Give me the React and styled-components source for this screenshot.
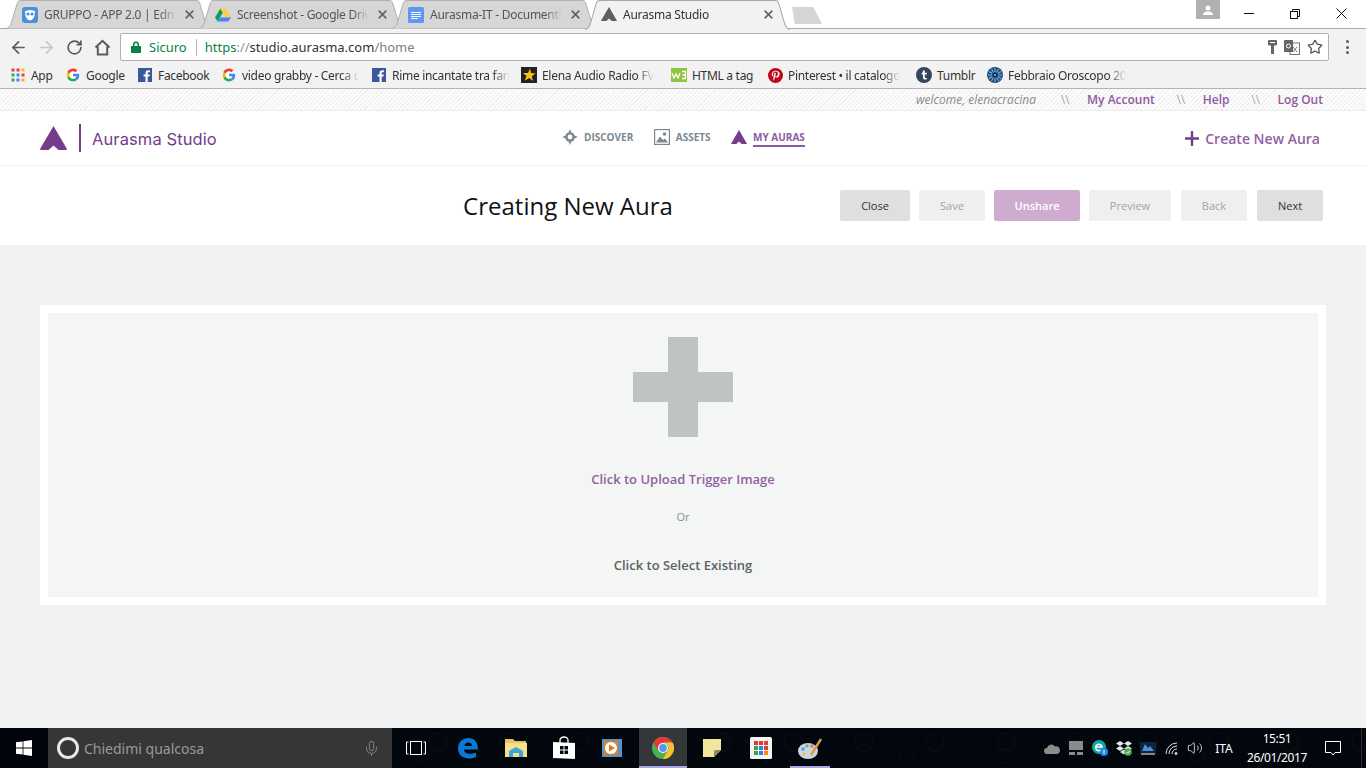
import { ArrowLeft, ArrowRight, RotateCw, Star, Mic, Volume2 } from "lucide-react";
import styled, { createGlobalStyle } from "styled-components";

const GlobalStyle = createGlobalStyle`
  html, body { margin: 0; padding: 0; height: 100%; overflow: hidden; }
  body { font-family: "Open Sans", "Liberation Sans", sans-serif; }
  * { box-sizing: border-box; }
`;

const Page = styled.div`
  width: 1366px;
  height: 768px;
  display: flex;
  flex-direction: column;
  overflow: hidden;
  background: #f1f2f4;
`;

/* browser chrome */
const TabStrip = styled.div`
  height: 29px;
  flex: none;
  display: flex;
  background: #fff;
  border-bottom: 1px solid #aaa;
  padding-left: 6px;
`;

const TabBox = styled.div`
  position: relative;
  width: 205px;
  height: ${(p) => (p.$active ? "30px" : "29px")};
  margin-right: -12px;
  padding: 0 16px;
  display: flex;
  align-items: center;
  z-index: ${(p) => (p.$active ? 2 : 1)};
  flex: none;
  & > svg.shape {
    position: absolute;
    left: 0;
    top: 0;
    width: 100%;
    height: 100%;
    z-index: -1;
  }
`;

const TabIcon = styled.span`
  width: 16px;
  height: 16px;
  display: flex;
  margin-right: 6px;
  flex: none;
  margin-bottom: ${(p) => (p.$active ? "1px" : "0")};
`;

const TabTitle = styled.span`
  font: 12px "Noto Sans", sans-serif;
  letter-spacing: -0.25px;
  color: ${(p) => (p.$active ? "#333" : "#555")};
  width: 136px;
  white-space: nowrap;
  overflow: hidden;
  flex: none;
  margin-bottom: ${(p) => (p.$active ? "1px" : "0")};
  mask-image: linear-gradient(to right, #000 85%, transparent 97%);
`;

const TabClose = styled.svg`
  width: 9px;
  height: 9px;
  margin-left: 5px;
  flex: none;
  margin-bottom: ${(p) => (p.$active ? "1px" : "0")};
`;

const NewTab = styled.div`
  width: 34px;
  height: 17px;
  margin: 7px 0 0 10px;
  flex: none;
  background: #d5d5d5;
  clip-path: polygon(12% 0, 74% 0, 100% 100%, 20% 100%);
`;

const WindowControls = styled.div`
  margin-left: auto;
  display: flex;
  height: 28px;
  padding-right: 2px;
  align-items: flex-start;
`;

const ProfileBadge = styled.div`
  width: 24px;
  height: 19px;
  background: #b0b0b0;
  display: flex;
  align-items: center;
  justify-content: center;
  margin-right: 6px;
`;

const WinButton = styled.div`
  width: 46px;
  height: 27px;
  display: flex;
  align-items: center;
  justify-content: center;
`;

const Toolbar = styled.div`
  height: 33px;
  flex: none;
  display: flex;
  align-items: center;
  background: #f2f2f2;
  padding: 3px 0 0 4px;
`;

const NavButton = styled.div`
  width: 28px;
  height: 24px;
  display: flex;
  align-items: center;
  justify-content: center;
  flex: none;
`;

const Omnibox = styled.div`
  width: 1209px;
  height: 28px;
  margin-left: 4px;
  background: #fff;
  border: 1px solid #b0b0b0;
  border-radius: 2px;
  display: flex;
  align-items: center;
  padding: 0 5px 0 10px;
  font: 13px "Noto Sans", sans-serif;
`;

const Secure = styled.span`
  color: #0b8043;
  margin-left: 8px;
  padding-right: 9px;
  border-right: 1px solid #b8b8b8;
  line-height: 17px;
`;

const Url = styled.span`
  margin-left: 8px;
  color: #0b8043;
  u { text-decoration: none; color: #8a9a92; }
  b { font-weight: 400; color: #333; }
  i { font-style: normal; color: #808080; }
`;

const OmniIcons = styled.div`
  margin-left: auto;
  display: flex;
  align-items: center;
  gap: 7px;
`;

const MenuDots = styled.div`
  margin-left: 17px;
  display: flex;
  flex-direction: column;
  gap: 2.5px;
  span {
    width: 3px;
    height: 3px;
    border-radius: 50%;
    background: #5f5f5f;
  }
`;

const BookmarkBar = styled.div`
  height: 27px;
  flex: none;
  display: flex;
  align-items: center;
  background: #f2f2f2;
  border-bottom: 1px solid #b4b4b4;
  padding-left: 10px;
`;

const Bookmark = styled.div`
  width: ${(p) => p.$w}px;
  flex: none;
  display: flex;
  align-items: center;
  gap: 5px;
  font: 12px "Noto Sans", sans-serif;
  letter-spacing: -0.3px;
  color: #333;
  white-space: nowrap;
`;

const BookmarkIcon = styled.span`
  width: 16px;
  height: 16px;
  flex: none;
  display: flex;
  align-items: center;
  justify-content: center;
`;

const BookmarkLabel = styled.span`
  ${(p) =>
    p.$fade
      ? `mask-image: linear-gradient(to right, #000 85%, transparent 100%);`
      : ""}
`;

/* site header */
const UserBar = styled.div`
  height: 22px;
  flex: none;
  display: flex;
  align-items: center;
  justify-content: flex-end;
  padding: 0 43px 1px 0;
  font-size: 12px;
  color: #8b8b8b;
  border-bottom: 1px solid #ececec;
  background: repeating-linear-gradient(135deg, #fff 0 1.5px, #f1f1f1 1.5px 3px);
`;

const Welcome = styled.i`
  margin-right: 3px;
`;

const UserLink = styled.span`
  color: #8f5a9f;
  font-weight: 600;
`;

const Slashes = styled.span`
  margin: 0 17px 0 22px;
  color: #777;
  width: 9px;
  font-weight: 300;
`;

const Header = styled.header`
  height: 55px;
  flex: none;
  background: #fff;
  border-bottom: 1px solid #f0f0f0;
  display: flex;
  align-items: center;
  padding: 0 46px 0 40px;
`;

const Brand = styled.div`
  display: flex;
  align-items: center;
  width: 522px;
  flex: none;
`;

const BrandName = styled.span`
  margin-left: 11px;
  padding-top: 2px;
  font: 400 16.5px Inter, sans-serif;
  letter-spacing: 0.1px;
  color: #753c8b;
`;

const BrandRule = styled.span`
  width: 2px;
  height: 28px;
  margin-left: 12px;
  background: #753c8b;
`;

const Nav = styled.nav`
  display: flex;
  align-items: center;
  gap: 20.5px;
  margin-bottom: 2px;
`;

const NavItem = styled.div`
  display: flex;
  align-items: center;
  gap: 6px;
  font-size: 10px;
  font-weight: 700;
  color: ${(p) => (p.$active ? "#8f5a9f" : "#7c8791")};
  span {
    padding: 2px 0 1px;
    border-bottom: 2px solid ${(p) => (p.$active ? "#8f5a9f" : "transparent")};
  }
`;

const CreateLink = styled.div`
  margin-left: auto;
  display: flex;
  align-items: center;
  gap: 6px;
  font-size: 14px;
  font-weight: 600;
  color: #935fa3;
`;

const TitleRow = styled.div`
  height: 79px;
  flex: none;
  background: #fff;
  display: flex;
  align-items: center;
  padding: 0 43px 0 296px;
`;

const Title = styled.h1`
  flex: 1;
  margin: 0;
  text-align: center;
  font-size: 24px;
  font-weight: 400;
  color: #111;
`;

const Buttons = styled.div`
  display: flex;
  gap: 9px;
`;

const ActionButton = styled.button`
  width: ${(p) => p.$w}px;
  height: 31px;
  margin-left: ${(p) => p.$ml || 0}px;
  padding: 0;
  border: 0;
  border-radius: 2px;
  font-family: inherit;
  font-size: 11px;
  font-weight: ${(p) => (p.$kind === "accent" ? 600 : 400)};
  background: ${(p) =>
    p.$kind === "accent" ? "#cfabcf" : p.$kind === "off" ? "#efefef" : "#dfdfdf"};
  color: ${(p) =>
    p.$kind === "accent" ? "#fff" : p.$kind === "off" ? "#a4a4a4" : "#333"};
`;

/* main */
const Main = styled.main`
  flex: 1;
  min-height: 0;
  padding: 60px 40px 0;
`;

const Card = styled.section`
  height: 300px;
  padding: 8px;
  background: #fff;
`;

const DropZone = styled.div`
  height: 100%;
  padding-top: 24px;
  background: #f4f6f6;
  display: flex;
  flex-direction: column;
  align-items: center;
`;

const BigPlus = styled.div`
  width: 100px;
  height: 100px;
  flex: none;
  background:
    linear-gradient(#bfc3c4, #bfc3c4) center / 30px 100px no-repeat,
    linear-gradient(#bfc3c4, #bfc3c4) center / 100px 30px no-repeat;
`;

const UploadText = styled.div`
  margin-top: 33px;
  line-height: 18px;
  font-size: 13px;
  font-weight: 600;
  color: #935fa3;
`;

const OrText = styled.div`
  margin-top: 21px;
  line-height: 16px;
  font-size: 11px;
  color: #8b9296;
`;

const SelectText = styled.div`
  margin-top: 31px;
  line-height: 18px;
  font-size: 13px;
  font-weight: 600;
  color: #5d6161;
`;

/* windows taskbar */
const Taskbar = styled.footer`
  height: 40px;
  flex: none;
  display: flex;
  align-items: stretch;
  color: #fff;
  background:
    radial-gradient(circle at 12px 14px, transparent 8px, #0a0e15 9px, transparent 10px) 0 0 / 71px 40px,
    radial-gradient(circle at 34px 28px, transparent 6px, #090d14 7px, transparent 8px) 0 0 / 97px 40px,
    #02060d;
`;

const StartButton = styled.div`
  width: 48px;
  flex: none;
  display: flex;
  align-items: center;
  justify-content: center;
  background: #01040a;
`;

const SearchBox = styled.div`
  width: 344px;
  flex: none;
  display: flex;
  align-items: center;
  background: #363636;
  padding: 0 12px 0 9px;
  font: 14px "Noto Sans", sans-serif;
  color: #9a9a9a;
  svg { margin-left: auto; }
`;

const CortanaRing = styled.span`
  width: 22px;
  height: 22px;
  margin-right: 5px;
  border: 3px solid #e8e8e8;
  border-radius: 50%;
  flex: none;
`;

const TaskView = styled.div`
  width: 52px;
  flex: none;
  display: flex;
  align-items: center;
  justify-content: center;
  padding-right: 4px;
`;

const TaskSlot = styled.div`
  position: relative;
  width: 48px;
  flex: none;
  margin-left: ${(p) => p.$ml || 0}px;
  display: flex;
  align-items: center;
  justify-content: center;
  background: ${(p) => (p.$active ? "#34373a" : "transparent")};
  ${(p) =>
    p.$open
      ? `&::after {
          content: "";
          position: absolute;
          bottom: 0;
          left: ${p.$active ? 0 : 4}px;
          right: ${p.$active ? 0 : 4}px;
          height: 2px;
          background: #a8a4e6;
        }`
      : ""}
`;

const Tray = styled.div`
  margin-left: auto;
  display: flex;
  align-items: center;
`;

const TrayIcon = styled.div`
  width: ${(p) => p.$w || 24}px;
  display: flex;
  justify-content: center;
`;

const Lang = styled.div`
  width: 36px;
  text-align: center;
  font: 12px "Noto Sans", sans-serif;
`;

const Clock = styled.div`
  width: 64px;
  margin-left: 3px;
  text-align: center;
  font: 12px/19px "Noto Sans", sans-serif;
  letter-spacing: -0.4px;
  white-space: nowrap;
`;

const Notify = styled.div`
  width: 48px;
  display: flex;
  justify-content: center;
  align-items: center;
`;

const ShowDesktop = styled.div`
  width: 5px;
  height: 40px;
  margin-left: 4px;
  border-left: 1px solid #2a2a2a;
`;

/* drawings */
function AuraMark({ size = 16, color = "#5f5f5f" }) {
  return (
    <svg width={size} height={size * 0.89} viewBox="0 0 27 24">
      <path
        fill={color}
        d="M13.5 0 L26.7 22.6 Q27.2 24 26 24 H18.5 L13.5 19.5 L8.5 24 H1 Q-.2 24 .3 22.6 Z"
      />
    </svg>
  );
}

function EdmodoIcon() {
  return (
    <svg width="16" height="16" viewBox="0 0 16 16">
      <rect width="16" height="16" rx="3" fill="#4a90d9" />
      <path fill="#fff" d="M3 4 L8 3 L13 4 L12.5 9 Q11 13 8 13.5 Q5 13 3.5 9 Z" />
      <circle cx="6" cy="7" r="1.6" fill="#4a90d9" />
      <circle cx="10" cy="7" r="1.6" fill="#4a90d9" />
    </svg>
  );
}

function DriveIcon() {
  return (
    <svg width="16" height="16" viewBox="0 0 16 16">
      <path fill="#0f9d58" d="M5.3 1.5 L0 10.5 L2.7 14.5 L8 5.5 Z" />
      <path fill="#ffcd40" d="M5.3 1.5 H10.7 L16 10.5 H10.7 Z" />
      <path fill="#4687f4" d="M2.7 14.5 L5.3 10.5 H16 L13.3 14.5 Z" />
    </svg>
  );
}

function DocsIcon() {
  return (
    <svg width="16" height="16" viewBox="0 0 16 16">
      <rect width="16" height="16" rx="1.5" fill="#5e97f6" />
      <path stroke="#fff" strokeWidth="1" d="M3 5.5 H13 M3 7.5 H13 M3 9.5 H13 M3 11.5 H10" />
    </svg>
  );
}

function GoogleIcon() {
  return (
    <svg width="14" height="14" viewBox="0 0 48 48">
      <circle cx="24" cy="24" r="24" fill="#fff" />
      <path fill="#ea4335" d="M24 11c3.4 0 6.4 1.2 8.8 3.4l6.5-6.5C35.3 4.2 30.100 2 24 2 15.400 2 8 6.900 4.400 14.100l7.600 5.900C13.800 14.700 18.500 11 24 11z" />
      <path fill="#4285f4" d="M45.500 24.500c0-1.600-.1-3.100-.4-4.500H24v8.500h12.100c-.5 2.800-2.100 5.100-4.500 6.700l7.300 5.700c4.300-4 6.600-9.800 6.600-16.400z" />
      <path fill="#fbbc05" d="M12 28c-.5-1.300-.7-2.600-.7-4s.3-2.700.7-4l-7.600-5.900C2.900 17.100 2 20.400 2 24s.9 6.900 2.400 9.900L12 28z" />
      <path fill="#34a853" d="M24 46c6 0 11-2 14.800-5.400l-7.300-5.700c-2 1.400-4.600 2.200-7.500 2.200-5.500 0-10.200-3.700-12-8.900l-7.600 5.900C8 41.100 15.400 46 24 46z" />
    </svg>
  );
}

function FacebookIcon() {
  return (
    <svg width="14" height="14" viewBox="0 0 14 14">
      <rect width="14" height="14" fill="#3b5998" />
      <path fill="#fff" d="M9.700 14 V8.600 H11.500 L11.800 6.500 H9.700 V5.200 C9.700 4.600 9.900 4.200 10.700 4.200 H11.900 V2.300 C11.600 2.300 11 2.200 10.200 2.200 C8.600 2.200 7.500 3.200 7.500 5 V6.500 H5.600 V8.600 H7.500 V14 Z" />
    </svg>
  );
}

function AppsIcon() {
  const colors = ["#ea4335", "#ea4335", "#fbbc05", "#34a853", "#4285f4", "#ea4335", "#34a853", "#4285f4", "#fbbc05"];
  return (
    <svg width="14" height="14" viewBox="0 0 14 14">
      {colors.map((c, i) => (
        <rect key={i} x={(i % 3) * 5 + 0.5} y={Math.floor(i / 3) * 5 + 0.5} width="3" height="3" fill={c} />
      ))}
    </svg>
  );
}

function StarBadge() {
  return (
    <svg width="16" height="16" viewBox="0 0 16 16">
      <rect width="16" height="16" fill="#222" />
      <path fill="#f7c413" d="M9 1.500 L10 6 L14.500 6.500 L10.800 9.300 L12 14 L8.300 11 L3.800 13.500 L5.500 9 L2 6 L7 6 Z" />
    </svg>
  );
}

function W3Icon() {
  return (
    <svg width="16" height="16" viewBox="0 0 16 16">
      <rect y="1" width="16" height="14" fill="#8cc63f" />
      <path fill="none" stroke="#fff" strokeWidth="1.300" d="M1 6 L3 11 L5 7 L7 11 L9 6 M11 4.500 H14.500 V11.500 H11 M11.500 8 H14.500" />
    </svg>
  );
}

function PinterestIcon() {
  return (
    <svg width="15" height="15" viewBox="0 0 16 16">
      <circle cx="8" cy="8" r="8" fill="#bd081c" />
      <path fill="#fff" d="M8.300 3C5.700 3 4 4.800 4 6.700c0 1.100.5 2 1.300 2.400.2.100.3 0 .4-.2l.1-.6c0-.2 0-.3-.1-.4-.3-.4-.5-.8-.5-1.400 0-1.500 1.100-2.700 2.900-2.700 1.600 0 2.400 1 2.400 2.200 0 1.700-.7 3-1.800 3-.6 0-1-.5-.9-1.100.2-.7.5-1.500.5-2 0-.5-.3-.9-.8-.9-.6 0-1.100.6-1.100 1.500 0 .5.200.9.200.9l-.8 3.200c-.2 1-.1 2.100 0 2.900.5-.6 1-1.500 1.300-2.300l.5-1.800c.2.400.9.800 1.500.8 2 0 3.300-1.800 3.300-4.200C12.400 4.600 10.700 3 8.300 3z" />
    </svg>
  );
}

function TumblrIcon() {
  return (
    <svg width="16" height="16" viewBox="0 0 16 16">
      <circle cx="8" cy="8" r="8" fill="#35465c" />
      <path fill="#fff" d="M7 3.500 H8.800 V5.800 H10.800 V7.400 H8.800 V10 C8.800 10.900 9.500 11.100 10.800 10.700 V12.200 C8.500 13 7 12.200 7 10.400 V7.400 H5.700 V6.200 C6.500 5.900 6.900 4.900 7 3.500 Z" />
    </svg>
  );
}

function ZodiacIcon() {
  const spokes = Array.from({ length: 12 }, (_, i) => i * 30);
  return (
    <svg width="16" height="16" viewBox="0 0 16 16">
      <circle cx="8" cy="8" r="8" fill="#1d4e7f" />
      {spokes.map((a) => (
        <rect key={a} x="7.500" y="1" width="1" height="4" fill="#7fb1d9" transform={`rotate(${a} 8 8)`} />
      ))}
      <circle cx="8" cy="8" r="2.500" fill="#0d2f52" />
      <circle cx="8" cy="8" r="1" fill="#9cc6e6" />
    </svg>
  );
}

function HomeIcon() {
  return (
    <svg width="17" height="17" viewBox="0 0 17 17" fill="none" stroke="#5a5a5a" strokeWidth="2">
      <path d="M1.500 8.500 L8.500 1.800 L15.500 8.500" />
      <path d="M3.800 7.500 V15.500 H13.200 V7.500" />
    </svg>
  );
}

function LockIcon() {
  return (
    <svg width="10" height="12" viewBox="0 0 10 12">
      <path fill="none" stroke="#0b8043" strokeWidth="1.500" d="M2.700 5.500 V3.500 A2.300 2.300 0 0 1 7.300 3.500 V5.500" />
      <rect y="5" width="10" height="7" rx="0.500" fill="#0b8043" />
    </svg>
  );
}

function KeyIcon() {
  return (
    <svg width="9" height="15" viewBox="0 0 9 15">
      <rect width="9" height="5.500" rx="1" fill="#666" />
      <rect x="3" y="5" width="3" height="9" fill="#666" />
      <rect x="2" y="2" width="5" height="1" fill="#fff" />
    </svg>
  );
}

function TranslateIcon() {
  return (
    <svg width="16" height="15" viewBox="0 0 16 15">
      <rect x="6" y="3" width="9.500" height="11.500" fill="#fff" stroke="#777" />
      <rect width="9" height="12" rx="0.500" fill="#666" />
      <circle cx="4.500" cy="6" r="2" fill="none" stroke="#fff" />
      <path stroke="#777" d="M9 7 L13 12 M13 7 L9 12" />
    </svg>
  );
}

function DiscoverIcon() {
  return (
    <svg width="16" height="16" viewBox="0 0 16 16">
      <path fill="#7c8791" d="M8 0 L9.300 3.200 A5 5 0 0 1 12.800 6.700 L16 8 L12.800 9.300 A5 5 0 0 1 9.300 12.800 L8 16 L6.700 12.800 A5 5 0 0 1 3.200 9.300 L0 8 L3.200 6.700 A5 5 0 0 1 6.700 3.200 Z" />
      <circle cx="8" cy="8" r="2.400" fill="#fff" />
    </svg>
  );
}

function AssetsIcon() {
  return (
    <svg width="16" height="16" viewBox="0 0 16 16">
      <rect x="0.600" y="0.600" width="14.800" height="14.800" fill="#fff" stroke="#7c8791" strokeWidth="1.200" />
      <circle cx="10.500" cy="5" r="1.800" fill="#7c8791" />
      <path fill="#7c8791" d="M2 13.500 L6 7.500 L9 11 L11 9.500 L14 13.500 Z" />
    </svg>
  );
}

function PlusMark() {
  return (
    <svg width="14" height="15" viewBox="0 0 14 15">
      <path fill="#753c8b" d="M5.800 0 H8.200 V6.300 H14 V8.700 H8.200 V15 H5.800 V8.700 H0 V6.300 H5.800 Z" />
    </svg>
  );
}

function WinLogo() {
  return (
    <svg width="16" height="16" viewBox="0 0 16 16">
      <path fill="#fff" d="M0 2.300 L6.600 1.400 V7.600 H0 Z M7.400 1.300 L16 0 V7.600 H7.400 Z M0 8.400 H6.600 V14.600 L0 13.700 Z M7.400 8.400 H16 V16 L7.400 14.700 Z" />
    </svg>
  );
}

function EdgeIcon() {
  return (
    <svg width="20" height="21" viewBox="0 0 20 21">
      <path fill="#0a78d7" d="M0 10 C.5 3.500 5 0 10.500 0 C16.500 0 20 4.500 20 11.500 H6 C6.300 15.500 11.500 17.500 18 14.500 V19 C10 22.500 0 20 0 10 Z M6.300 8 H14 C14 3.500 7.500 3.200 6.300 8 Z" />
    </svg>
  );
}

function ExplorerIcon() {
  return (
    <svg width="22" height="18" viewBox="0 0 22 18">
      <path fill="#e8c35c" d="M0 0 H8 L10 2 H21 V5 H0 Z" />
      <path fill="#f7e08c" d="M0 4 H22 V18 H0 Z" />
      <path fill="#3aa6de" d="M4 18 V12 L11 8 L18 12 V18 H14 V14 H8 V18 Z" />
    </svg>
  );
}

function StoreIcon() {
  return (
    <svg width="22" height="24" viewBox="0 0 22 24">
      <path fill="none" stroke="#fff" strokeWidth="1.300" d="M7 7 V4 A4 3 0 0 1 15 4 V7" />
      <path fill="#fff" d="M0 6 L22 7 V23 L0 22 Z" />
      <path fill="#05090f" d="M7 10 H10.500 V13.500 H7 Z M11.500 10 H15 V13.500 H11.500 Z M7 14.500 H10.500 V18 H7 Z M11.500 14.500 H15 V18 H11.500 Z" />
    </svg>
  );
}

function MediaIcon() {
  return (
    <svg width="20" height="18" viewBox="0 0 20 18">
      <rect width="20" height="18" fill="#5b92c4" />
      <rect x="2" y="2" width="14" height="14" fill="#d9812d" />
      <circle cx="9" cy="9" r="6" fill="#fff" />
      <path fill="#e8761f" d="M7 5.500 L13 9 L7 12.500 Z" />
    </svg>
  );
}

function ChromeIcon() {
  return (
    <svg width="22" height="22" viewBox="0 0 48 48">
      <circle cx="24" cy="24" r="24" fill="#4caf50" />
      <path fill="#e53935" d="M24 0 A24 24 0 0 1 44.800 12 H24 A12 12 0 0 0 13.600 18 L3.200 12 A24 24 0 0 1 24 0 Z" />
      <path fill="#e53935" d="M3.200 12 L13.600 30 L24 12 Z" />
      <path fill="#fbc02d" d="M44.800 12 A24 24 0 0 1 24 48 L34.400 30 A12 12 0 0 0 24 12 Z" />
      <circle cx="24" cy="24" r="11" fill="#fff" />
      <circle cx="24" cy="24" r="8.500" fill="#5a96ee" />
    </svg>
  );
}

function StickyIcon() {
  return (
    <svg width="18" height="18" viewBox="0 0 18 18">
      <path fill="#f1e79b" d="M0 0 H18 V11 L11 18 H0 Z" />
      <path fill="#8a8468" d="M18 11 L11 18 V13 Q11 11 13 11 Z" />
    </svg>
  );
}

function GridAppIcon() {
  const colors = ["#e53935", "#e53935", "#e53935", "#43a047", "#1e88e5", "#e53935", "#43a047", "#1e88e5", "#fb8c00"];
  return (
    <svg width="22" height="22" viewBox="0 0 22 22">
      <rect width="22" height="22" rx="1.500" fill="#f3f3f3" />
      {colors.map((c, i) => (
        <rect key={i} x={(i % 3) * 5 + 4} y={Math.floor(i / 3) * 5 + 4} width="4" height="4" fill={c} />
      ))}
    </svg>
  );
}

function PaintIcon() {
  return (
    <svg width="25" height="23" viewBox="0 0 25 23">
      <ellipse cx="10" cy="14" rx="10" ry="8" fill="#c9d6e6" />
      <circle cx="5" cy="12" r="1.800" fill="#4aa3df" />
      <circle cx="9" cy="9" r="1.800" fill="#6cbf4b" />
      <circle cx="14" cy="9" r="1.800" fill="#e57373" />
      <circle cx="6" cy="17" r="1.800" fill="#f0c04a" />
      <path stroke="#d89b4a" strokeWidth="2.500" d="M13 18 L23 2" />
    </svg>
  );
}

function CloudIcon() {
  return (
    <svg width="16" height="11" viewBox="0 0 16 11">
      <path fill="#8d8d8d" d="M3 11 A3 3 0 0 1 3 5 A4.500 4.500 0 0 1 11 3.500 A3.800 3.800 0 0 1 13 11 Z" />
    </svg>
  );
}

function NetDriveIcon() {
  return (
    <svg width="14" height="14" viewBox="0 0 14 14">
      <rect width="14" height="9" fill="#8a8a8a" />
      <rect y="11" width="6" height="3" fill="#8a8a8a" />
      <rect x="8" y="11" width="6" height="3" fill="#8a8a8a" />
    </svg>
  );
}

function EsetIcon() {
  return (
    <svg width="16" height="16" viewBox="0 0 16 16">
      <circle cx="7" cy="7" r="7" fill="#13a8a8" />
      <path fill="none" stroke="#fff" strokeWidth="1.600" d="M3.500 7 H10 A3.200 3.200 0 1 0 9 9.800" />
      <circle cx="12" cy="12" r="4" fill="#1e88e5" />
      <rect x="11.500" y="10" width="1" height="4" fill="#fff" />
    </svg>
  );
}

function DropboxIcon() {
  return (
    <svg width="16" height="15" viewBox="0 0 16 15">
      <path fill="#e8e8e8" d="M4 0 L8 2.500 L4 5 L0 2.500 Z M12 0 L16 2.500 L12 5 L8 2.500 Z M4 5 L8 7.500 L4 10 L0 7.500 Z M12 5 L16 7.500 L12 10 L8 7.500 Z M4 11 L8 8.500 L12 11 L8 13.500 Z" />
      <circle cx="12" cy="11" r="3.800" fill="#4caf50" />
      <path fill="none" stroke="#fff" d="M10.300 11 L11.600 12.300 L13.800 9.800" />
    </svg>
  );
}

function MonitorIcon() {
  return (
    <svg width="16" height="13" viewBox="0 0 16 13">
      <rect width="16" height="11" fill="#10233f" />
      <path fill="#4a90d9" d="M2 9 L5 2 L8 6 L10 4 L14 9 Z" />
      <rect x="1" y="11" width="14" height="2" fill="#888" />
    </svg>
  );
}

function WifiIcon() {
  return (
    <svg width="15" height="13" viewBox="0 0 15 13" fill="none" stroke="#ddd" strokeWidth="1">
      <path d="M1 12 A11 11 0 0 1 12 1" />
      <path d="M4 12 A8 8 0 0 1 12 4" />
      <path d="M7 12 A5 5 0 0 1 12 7" />
      <circle cx="11" cy="11.500" r="1" fill="#ddd" />
    </svg>
  );
}

function TabShape({ active }) {
  return (
    <svg className="shape" viewBox="0 0 205 29" preserveAspectRatio="none">
      <path
        d="M0 28.500 C3 28 4 26 5 24 L11.500 2.500 C12 1 13 .5 15 .5 H190 C192 .5 193 1 193.500 2.500 L200 24 C201 26 202 28 205 28.500"
        fill={active ? "#f2f2f2" : "#d6d6d6"}
        stroke={active ? "#a8a8a8" : "#b0b0b0"}
        strokeWidth="1"
      />
    </svg>
  );
}

function Tab({ icon, title, active }) {
  return (
    <TabBox $active={active}>
      <TabShape active={active} />
      <TabIcon $active={active}>{icon}</TabIcon>
      <TabTitle $active={active}>{title}</TabTitle>
      <TabClose $active={active} viewBox="0 0 9 9" stroke="#666" strokeWidth="1.700">
        <path d="M.7 .7 L8.300 8.300 M8.300 .7 L.7 8.300" />
      </TabClose>
    </TabBox>
  );
}

const bookmarks = [
  { w: 55, icon: <AppsIcon />, label: "App" },
  { w: 72, icon: <GoogleIcon />, label: "Google" },
  { w: 84, icon: <FacebookIcon />, label: "Facebook" },
  { w: 150, icon: <GoogleIcon />, label: "video grabby - Cerca c", fade: true },
  { w: 150, icon: <FacebookIcon />, label: "Rime incantate tra fan", fade: true },
  { w: 150, icon: <StarBadge />, label: "Elena Audio Radio FV", fade: true },
  { w: 96, icon: <W3Icon />, label: "HTML a tag" },
  { w: 149, icon: <PinterestIcon />, label: "Pinterest • il catalogo", fade: true },
  { w: 71, icon: <TumblrIcon />, label: "Tumblr" },
  { w: 150, icon: <ZodiacIcon />, label: "Febbraio Oroscopo 20", fade: true },
];

const actions = [
  { label: "Close", w: 70 },
  { label: "Save", w: 66, kind: "off" },
  { label: "Unshare", w: 86, kind: "accent" },
  { label: "Preview", w: 82, kind: "off" },
  { label: "Back", w: 66, kind: "off", ml: 1 },
  { label: "Next", w: 66, ml: 1 },
];

export default function App() {
  return (
    <Page>
      <GlobalStyle />
      <TabStrip>
        <Tab icon={<EdmodoIcon />} title="GRUPPO - APP 2.0 | Edm" />
        <Tab icon={<DriveIcon />} title="Screenshot - Google Driv" />
        <Tab icon={<DocsIcon />} title="Aurasma-IT - Documenti" />
        <Tab icon={<AuraMark />} title="Aurasma Studio" active />
        <NewTab />
        <WindowControls>
          <ProfileBadge>
            <svg width="12" height="10" viewBox="0 0 12 10">
              <circle cx="6" cy="3" r="2.500" fill="#fff" />
              <path fill="#fff" d="M1 10 Q1 6.500 6 6.500 Q11 6.500 11 10 Z" />
            </svg>
          </ProfileBadge>
          <WinButton>
            <svg width="10" height="1"><rect width="10" height="1" fill="#111" /></svg>
          </WinButton>
          <WinButton>
            <svg width="10" height="10" viewBox="0 0 10 10" fill="none" stroke="#111">
              <rect x=".5" y="2.500" width="7" height="7" />
              <path d="M2.500 2.500 V.5 H9.500 V7.500 H7.500" />
            </svg>
          </WinButton>
          <WinButton>
            <svg width="11" height="11" viewBox="0 0 11 11" stroke="#111">
              <path d="M.5 .5 L10.500 10.500 M10.500 .5 L.5 10.500" />
            </svg>
          </WinButton>
        </WindowControls>
      </TabStrip>

      <Toolbar>
        <NavButton><ArrowLeft size={19} color="#5a5a5a" strokeWidth={2.2} /></NavButton>
        <NavButton><ArrowRight size={19} color="#c8c8c8" strokeWidth={2.2} /></NavButton>
        <NavButton><RotateCw size={17} color="#5a5a5a" strokeWidth={2.4} /></NavButton>
        <NavButton><HomeIcon /></NavButton>
        <Omnibox>
          <LockIcon />
          <Secure>Sicuro</Secure>
          <Url>https<u>://</u><b>studio.aurasma.com</b><i>/home</i></Url>
          <OmniIcons>
            <KeyIcon />
            <TranslateIcon />
            <Star size={16} color="#5a5a5a" strokeWidth={2} />
          </OmniIcons>
        </Omnibox>
        <MenuDots><span /><span /><span /></MenuDots>
      </Toolbar>

      <BookmarkBar>
        {bookmarks.map((b) => (
          <Bookmark key={b.label} $w={b.w}>
            <BookmarkIcon>{b.icon}</BookmarkIcon>
            <BookmarkLabel $fade={b.fade}>{b.label}</BookmarkLabel>
          </Bookmark>
        ))}
      </BookmarkBar>

      <UserBar>
        <Welcome>welcome, elenacracina</Welcome>
        <Slashes>\\</Slashes>
        <UserLink>My Account</UserLink>
        <Slashes>\\</Slashes>
        <UserLink>Help</UserLink>
        <Slashes>\\</Slashes>
        <UserLink>Log Out</UserLink>
      </UserBar>

      <Header>
        <Brand>
          <AuraMark size={27} color="#753c8b" />
          <BrandRule />
          <BrandName>Aurasma Studio</BrandName>
        </Brand>
        <Nav>
          <NavItem><DiscoverIcon /><span>DISCOVER</span></NavItem>
          <NavItem><AssetsIcon /><span>ASSETS</span></NavItem>
          <NavItem $active><AuraMark size={16} color="#753c8b" /><span>MY AURAS</span></NavItem>
        </Nav>
        <CreateLink><PlusMark />Create New Aura</CreateLink>
      </Header>

      <TitleRow>
        <Title>Creating New Aura</Title>
        <Buttons>
          {actions.map((a) => (
            <ActionButton key={a.label} $w={a.w} $kind={a.kind} $ml={a.ml}>{a.label}</ActionButton>
          ))}
        </Buttons>
      </TitleRow>

      <Main>
        <Card>
          <DropZone>
            <BigPlus />
            <UploadText>Click to Upload Trigger Image</UploadText>
            <OrText>Or</OrText>
            <SelectText>Click to Select Existing</SelectText>
          </DropZone>
        </Card>
      </Main>

      <Taskbar>
        <StartButton><WinLogo /></StartButton>
        <SearchBox>
          <CortanaRing />
          Chiedimi qualcosa
          <Mic size={17} color="#8a8a8a" strokeWidth={1.3} />
        </SearchBox>
        <TaskView>
          <svg width="20" height="14" viewBox="0 0 20 14" fill="none" stroke="#fff">
            <rect x="4.500" y=".5" width="11" height="13" />
            <path d="M2.500 1 H.5 V13 H2.500 M17.500 1 H19.500 V13 H17.500" />
          </svg>
        </TaskView>
        <TaskSlot><EdgeIcon /></TaskSlot>
        <TaskSlot><ExplorerIcon /></TaskSlot>
        <TaskSlot><StoreIcon /></TaskSlot>
        <TaskSlot><MediaIcon /></TaskSlot>
        <TaskSlot $ml={3} $active $open><ChromeIcon /></TaskSlot>
        <TaskSlot $ml={1}><StickyIcon /></TaskSlot>
        <TaskSlot $ml={1}><GridAppIcon /></TaskSlot>
        <TaskSlot $ml={1} $open><PaintIcon /></TaskSlot>
        <Tray>
          <TrayIcon><CloudIcon /></TrayIcon>
          <TrayIcon><NetDriveIcon /></TrayIcon>
          <TrayIcon><EsetIcon /></TrayIcon>
          <TrayIcon><DropboxIcon /></TrayIcon>
          <TrayIcon><MonitorIcon /></TrayIcon>
          <TrayIcon><WifiIcon /></TrayIcon>
          <TrayIcon $w={22}><Volume2 size={16} color="#ddd" strokeWidth={1.3} /></TrayIcon>
          <Lang>ITA</Lang>
          <Clock>15:51<br />26/01/2017</Clock>
          <Notify>
            <svg width="16" height="15" viewBox="0 0 16 15" fill="none" stroke="#fff">
              <path d="M.5 .5 H15.500 V11.500 H10 L8 14 L6 11.500 H.5 Z" />
            </svg>
          </Notify>
          <ShowDesktop />
        </Tray>
      </Taskbar>
    </Page>
  );
}
